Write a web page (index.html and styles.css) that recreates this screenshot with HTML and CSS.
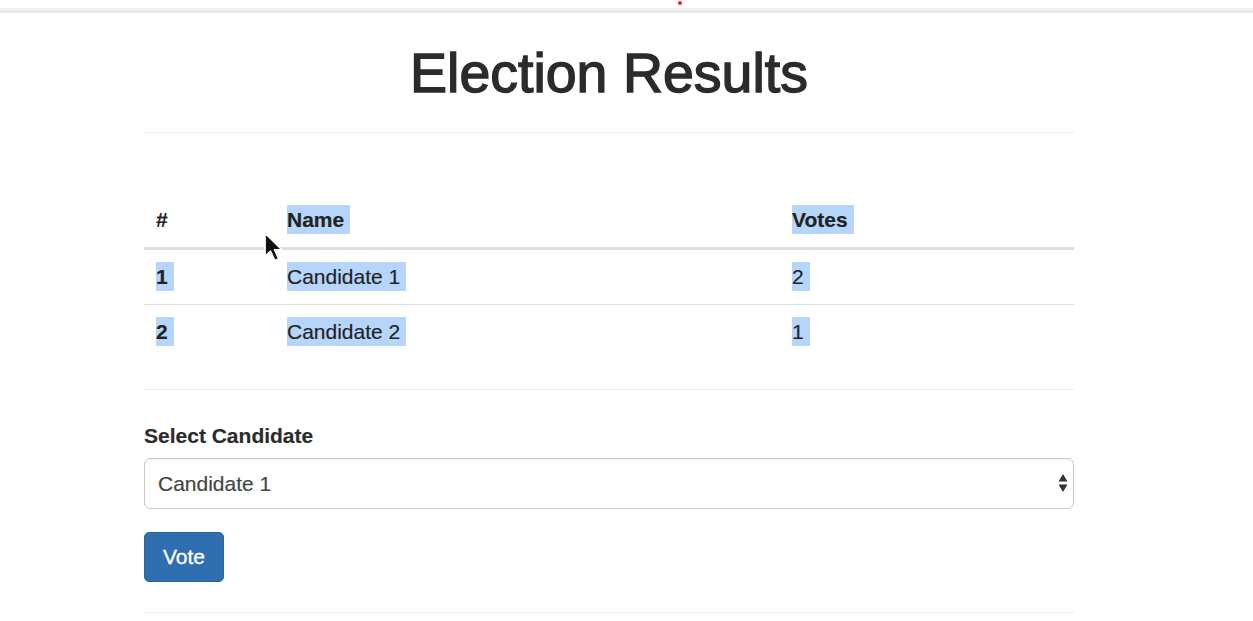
FILE: index.html
```html
<!DOCTYPE html>
<html>
<head>
<meta charset="utf-8">
<title>Election Results</title>
<link rel="stylesheet" href="styles.css">
</head>
<body>
<div class="topbar"><span class="dot"></span></div>
<div class="container">
  <div class="page-header">
    <h1>Election Results</h1>
  </div>
  <table class="results">
    <thead>
      <tr>
        <th class="c1">#</th>
        <th class="c2"><span class="sel">Name</span></th>
        <th class="c3"><span class="sel">Votes</span></th>
      </tr>
    </thead>
    <tbody>
      <tr>
        <td class="num"><span class="sel">1</span></td>
        <td><span class="sel">Candidate 1</span></td>
        <td><span class="sel">2</span></td>
      </tr>
      <tr>
        <td class="num"><span class="sel">2</span></td>
        <td><span class="sel">Candidate 2</span></td>
        <td><span class="sel">1</span></td>
      </tr>
    </tbody>
  </table>
  <hr>
  <form class="vote-form">
    <label class="lbl" for="cand">Select Candidate</label>
    <div class="select-wrap">
      <select id="cand" class="form-control">
        <option>Candidate 1</option>
        <option>Candidate 2</option>
      </select>
      <svg class="arrows" width="10" height="20" viewBox="0 0 10 20"><path d="M5 1 L9.5 8.5 H0.5 Z M0.5 11.5 H9.5 L5 19 Z" fill="#333"/></svg>
    </div>
    <button type="button" class="btn">Vote</button>
  </form>
  <hr class="last">
</div>
<svg class="cursor" width="20" height="28" viewBox="0 0 20 30"><path d="M1 1 L1 20 L5.5 15.8 L9 23.5 L12.2 22 L8.8 14.6 L14.8 14.6 Z" fill="#111" stroke="#fff" stroke-width="1.3" stroke-linejoin="round"/></svg>
</body>
</html>
```
FILE: styles.css
```css
html, body {
  margin: 0;
  padding: 0;
  background: #fff;
}
body {
  font-family: "Liberation Sans", Arial, Helvetica, sans-serif;
  font-size: 21px;
  line-height: 31px;
  color: #333;
  position: relative;
  min-height: 621px;
  -webkit-text-stroke: 0.15px currentColor;
}
.topbar {
  height: 8px;
  border-bottom: 3px solid #efefef;
  position: relative;
}
.topbar::after {
  content: "";
  display: block;
  position: absolute;
  left: 0;
  right: 0;
  bottom: -5px;
  height: 2px;
  background: #e5e5e5;
}
.dot {
  position: absolute;
  left: 678px;
  top: 1px;
  width: 4px;
  height: 4px;
  border-radius: 50%;
  background: #e61e1e;
}
.container {
  width: 930px;
  margin-left: 144px;
  padding-top: 2px;
}
.page-header {
  padding-top: 30px;
  padding-bottom: 29px;
  border-bottom: 1px solid #eee;
}
h1 {
  margin: 0;
  font-size: 55.5px;
  line-height: 60px;
  font-weight: normal;
  text-align: center;
  color: #2b2b2b;
  -webkit-text-stroke: 1.4px #2b2b2b;
}
.results {
  width: 100%;
  border-collapse: collapse;
  margin-top: 59px;
  margin-bottom: 30px;
  table-layout: fixed;
}
.results th, .results td {
  padding: 12px 12px;
  text-align: left;
  vertical-align: top;
  line-height: 31px;
}
.results td {
  padding-top: 11px;
  padding-bottom: 12px;
}
.results th {
  font-weight: bold;
  border-bottom: 3px solid #ddd;
  color: #222;
}
.results td {
  border-top: 1px solid #ddd;
  color: #222;
}
.results tbody tr:first-child td {
  border-top: 0;
}
.results td.num {
  font-weight: bold;
}
.c1 { width: 107px; }
.c2 { width: 481px; }
.sel {
  background: #b5d5fb;
  padding: 3px 6px 3px 0;
}
hr {
  margin: 0;
  border: 0;
  border-top: 1px solid #eee;
}
.vote-form {
  padding-top: 30px;
}
.lbl {
  display: block;
  font-weight: bold;
  margin-bottom: 7px;
  color: #2b2b2b;
}
.select-wrap {
  position: relative;
  margin-bottom: 23px;
}
.form-control {
  display: block;
  width: 100%;
  height: 51px;
  box-sizing: border-box;
  padding: 0 13px;
  font-family: "Liberation Sans", Arial, Helvetica, sans-serif;
  font-size: 21px;
  color: #444;
  background: #fff;
  border: 1.5px solid #c8c8c8;
  border-radius: 6px;
  box-shadow: inset 0 1px 2px rgba(0,0,0,0.06);
  -webkit-appearance: none;
  appearance: none;
  outline: none;
  -webkit-text-stroke: 0.15px #444;
}
.arrows {
  position: absolute;
  right: 6px;
  top: 15px;
}
.btn {
  display: block;
  height: 50px;
  padding: 0 18px;
  font-family: "Liberation Sans", Arial, Helvetica, sans-serif;
  font-size: 21px;
  color: #fff;
  background: #2f6faf;
  border: 1px solid #2b64a0;
  border-radius: 5px;
  margin-bottom: 30px;
  -webkit-text-stroke: 0.3px #fff;
}
.cursor {
  position: absolute;
  left: 263px;
  top: 232px;
  transform: scale(1.3);
  transform-origin: 0 0;
}
```
